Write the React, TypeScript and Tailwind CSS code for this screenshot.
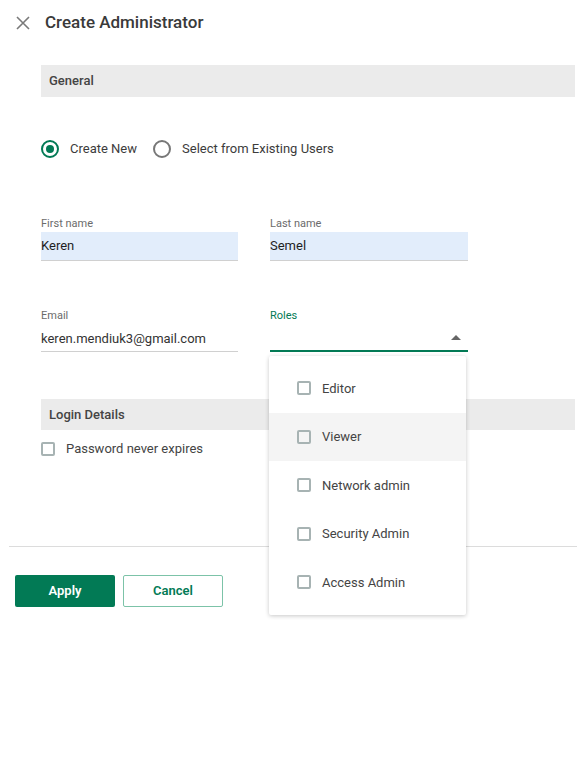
import React from "react";

const GREEN = "#027a55";

function Check({ label }: { label: string }) {
  return (
    <div className="flex items-center">
      <span className="w-[14px] h-[14px] border-2 border-[#a7b3b3] rounded-[2px] box-border" />
      <span className="ml-[11px] text-[13px] text-[#444]">{label}</span>
    </div>
  );
}

const roles = ["Editor", "Viewer", "Network admin", "Security Admin", "Access Admin"];

export default function App() {
  return (
    <div
      className="relative w-[577px] h-[758px] bg-white overflow-hidden"
      style={{ fontFamily: "Roboto, 'Noto Sans', sans-serif" }}
    >
      {/* header */}
      <div className="h-[46px] flex items-center">
        <svg className="ml-[16px]" width="14" height="14" viewBox="0 0 14 14">
          <path d="M1 1L13 13M13 1L1 13" stroke="#7a7a7a" strokeWidth="1.6" />
        </svg>
        <h1 className="ml-[15px] text-[17px] font-medium text-[#3a3a3a]">Create Administrator</h1>
      </div>

      {/* General */}
      <div className="mt-[19px] ml-[41px] mr-[2px] h-[32px] bg-[#ebebeb] flex items-center pl-[8px] text-[13px] font-medium text-[#444]">
        General
      </div>

      <div className="mt-[43px] ml-[41px] h-[18px] flex items-center">
        <span className="w-[18px] h-[18px] rounded-full border-2 border-[#027a55] flex items-center justify-center box-border">
          <span className="w-[8px] h-[8px] rounded-full bg-[#027a55]" />
        </span>
        <span className="ml-[11px] text-[13px] text-[#3c3c3c]">Create New</span>
        <span className="ml-[16px] w-[18px] h-[18px] rounded-full border-2 border-[#777] box-border" />
        <span className="ml-[11px] text-[13px] text-[#3c3c3c]">Select from Existing Users</span>
      </div>

      {/* name row */}
      <div className="mt-[59px] ml-[41px] flex gap-[32px]">
        <div className="w-[197px]">
          <div className="h-[14px] leading-[14px] text-[11px] text-[#6b6b6b]">First name</div>
          <div className="mt-[1px] h-[29px] bg-[#e2edfb] border-b border-[#d0d0d0] flex items-center text-[13px] text-[#1f1f1f]">
            Keren
          </div>
        </div>
        <div className="w-[198px]">
          <div className="h-[14px] leading-[14px] text-[11px] text-[#6b6b6b]">Last name</div>
          <div className="mt-[1px] h-[29px] bg-[#e2edfb] border-b border-[#d0d0d0] flex items-center text-[13px] text-[#1f1f1f]">
            Semel
          </div>
        </div>
      </div>

      {/* email / roles row */}
      <div className="mt-[48px] ml-[41px] flex gap-[32px]">
        <div className="w-[197px]">
          <div className="h-[14px] leading-[14px] text-[11px] text-[#6b6b6b]">Email</div>
          <div className="h-[29px] border-b border-[#d0d0d0] flex items-end pb-[4px] leading-[16px] text-[13px] text-[#333]">
            keren.mendiuk3@gmail.com
          </div>
        </div>
        <div className="relative w-[198px]">
          <div className="h-[14px] leading-[14px] text-[11px] text-[#027a55]">Roles</div>
          <div className="h-[29px] border-b-2 border-[#027a55] flex items-center justify-end pr-[7px] pt-[1px]">
            <svg width="10" height="5" viewBox="0 0 10 5">
              <path d="M0 5L5 0L10 5Z" fill="#666" />
            </svg>
          </div>
          <div className="absolute left-[-1px] top-[47px] w-[197px] bg-white rounded-[2px] py-[8px] shadow-[0_1px_4px_rgba(0,0,0,0.22)] z-10">
            {roles.map((r) => (
              <div
                key={r}
                className={`h-[48.5px] flex items-center pl-[28px] ${r === "Viewer" ? "bg-[#f4f4f4]" : ""}`}
              >
                <Check label={r} />
              </div>
            ))}
          </div>
        </div>
      </div>

      {/* Login details */}
      <div className="mt-[47px] ml-[41px] mr-[2px] h-[31px] bg-[#ebebeb] flex items-center pl-[8px] text-[13px] font-medium text-[#444]">
        Login Details
      </div>
      <div className="mt-[12px] ml-[41px] h-[14px] flex items-center">
        <Check label="Password never expires" />
      </div>

      <div className="mt-[90px] ml-[9px] border-t border-[#dcdcdc]" />

      <div className="mt-[28px] ml-[15px] flex gap-[8px]">
        <button
          className="w-[100px] h-[32px] rounded-[2px] text-white text-[13px] font-semibold"
          style={{ backgroundColor: GREEN }}
        >
          Apply
        </button>
        <button className="w-[100px] h-[32px] rounded-[2px] border border-[#7cc3a8] bg-white text-[#027a55] text-[13px] font-semibold">
          Cancel
        </button>
      </div>
    </div>
  );
}
